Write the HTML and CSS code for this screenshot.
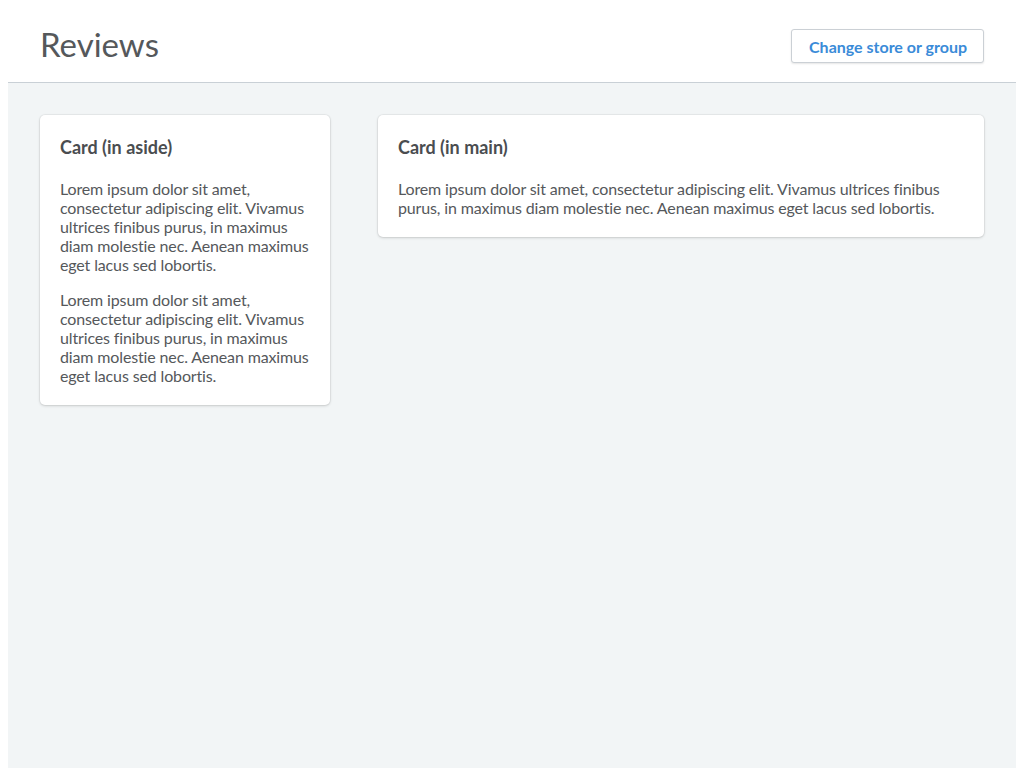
FILE: index.html
```html
<!DOCTYPE html>
<html lang="en">
<head>
<meta charset="utf-8">
<title>Reviews</title>
<link rel="stylesheet" href="styles.css">
</head>
<body>
<div class="page">
  <header class="header">
    <h1 class="title">Reviews</h1>
    <button class="btn">Change store or group</button>
  </header>
  <div class="content">
    <aside class="aside">
      <section class="card">
        <h2 class="card-title">Card (in aside)</h2>
        <p>Lorem ipsum dolor sit amet, consectetur adipiscing elit. Vivamus ultrices finibus purus, in maximus diam molestie nec. Aenean maximus eget lacus sed lobortis.</p>
        <p>Lorem ipsum dolor sit amet, consectetur adipiscing elit. Vivamus ultrices finibus purus, in maximus diam molestie nec. Aenean maximus eget lacus sed lobortis.</p>
      </section>
    </aside>
    <main class="main">
      <section class="card">
        <h2 class="card-title">Card (in main)</h2>
        <p>Lorem ipsum dolor sit amet, consectetur adipiscing elit. Vivamus ultrices finibus purus, in maximus diam molestie nec. Aenean maximus eget lacus sed lobortis.</p>
      </section>
    </main>
  </div>
</div>
</body>
</html>
```
FILE: styles.css
```css
body {
  margin: 8px;
  font-family: Lato, "Open Sans", sans-serif;
  color: #4a4d50;
  background: #fff;
}
.page {
  display: flex;
  flex-direction: column;
  min-height: 760px;
}
.header {
  box-sizing: border-box;
  height: 75px;
  padding: 0 32px;
  display: flex;
  align-items: center;
  justify-content: space-between;
  border-bottom: 1px solid #c9d0d6;
}
.title {
  margin: 0 0 2px;
  font-size: 33px;
  font-weight: 400;
  color: #55585b;
  line-height: 40px;
}
.btn {
  font-family: Lato, sans-serif;
  font-size: 16px;
  font-weight: 700;
  color: #3a8bd8;
  background: #fff;
  border: 1px solid #cbd0d5;
  border-radius: 3px;
  box-shadow: 0 1px 2px rgba(0,0,0,0.1);
  height: 34px;
  margin-top: 2px;
  padding: 0 16px 0 17px;
  cursor: pointer;
}
.content {
  flex: 1;
  background: #f2f5f6;
  padding: 32px;
  display: flex;
  gap: 48px;
  align-items: flex-start;
}
.aside {
  width: 290px;
  flex: none;
}
.main {
  flex: 1;
}
.card {
  background: #fff;
  border-radius: 5px;
  box-shadow: 0 0 0 1px rgba(0,0,0,0.04), 0 1px 3px rgba(0,0,0,0.15);
  padding: 20px;
}
.card-title {
  margin: 0 0 20px;
  font-size: 18px;
  font-weight: 700;
  line-height: 24px;
  color: #4a4d50;
}
.card p {
  margin: 0;
  font-size: 16px;
  line-height: 19px;
  letter-spacing: -0.14px;
  color: #55585b;
}
.card p + p {
  margin-top: 16px;
}
```
